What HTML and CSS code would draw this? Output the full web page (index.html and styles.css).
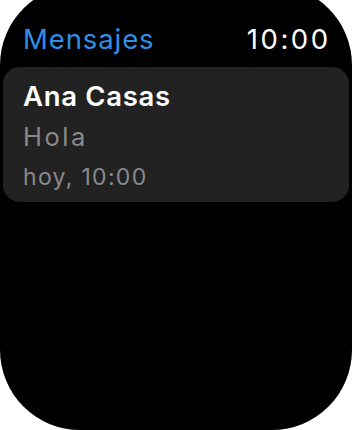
FILE: index.html
```html
<!DOCTYPE html>
<html lang="es">
<head>
<meta charset="utf-8">
<link rel="stylesheet" href="styles.css">
</head>
<body>
<div class="screen">
  <header class="header">
    <span class="title">Mensajes</span>
    <span class="clock">10:00</span>
  </header>
  <div class="card">
    <div class="name">Ana Casas</div>
    <div class="preview">Hola</div>
    <div class="time">hoy, 10:00</div>
  </div>
</div>
</body>
</html>
```
FILE: styles.css
```css
html, body {
  margin: 0;
  padding: 0;
  background: #ffffff;
}
body {
  width: 352px;
  height: 430px;
  overflow: hidden;
  font-family: Inter, "Noto Sans", sans-serif;
}
.screen {
  margin-top: -15px;
  height: 445px;
  background: #000000;
  border-radius: 80px;
  padding-top: 38px;
  box-sizing: border-box;
}
.header {
  display: flex;
  justify-content: space-between;
  align-items: baseline;
  padding: 0 21.5px 0 23px;
  font-size: 27.5px;
  line-height: 33px;
}
.title {
  color: #2f8fe8;
  letter-spacing: 0.9px;
}
.clock {
  color: #ffffff;
  letter-spacing: 2.5px;
}
.card {
  margin: 11px 3px 0 3px;
  background: #222222;
  border-radius: 17px;
  padding: 12.5px 20px 11px 20px;
}
.name {
  color: #ffffff;
  font-size: 27.5px;
  line-height: 33px;
  font-weight: 600;
  letter-spacing: 0.7px;
}
.preview {
  margin-top: 9px;
  color: #8a8a8a;
  font-size: 25.5px;
  line-height: 30px;
  letter-spacing: 2.5px;
}
.time {
  margin-top: 12.7px;
  color: #8a8a8a;
  font-size: 23px;
  line-height: 27px;
  letter-spacing: 1.3px;
}
```
